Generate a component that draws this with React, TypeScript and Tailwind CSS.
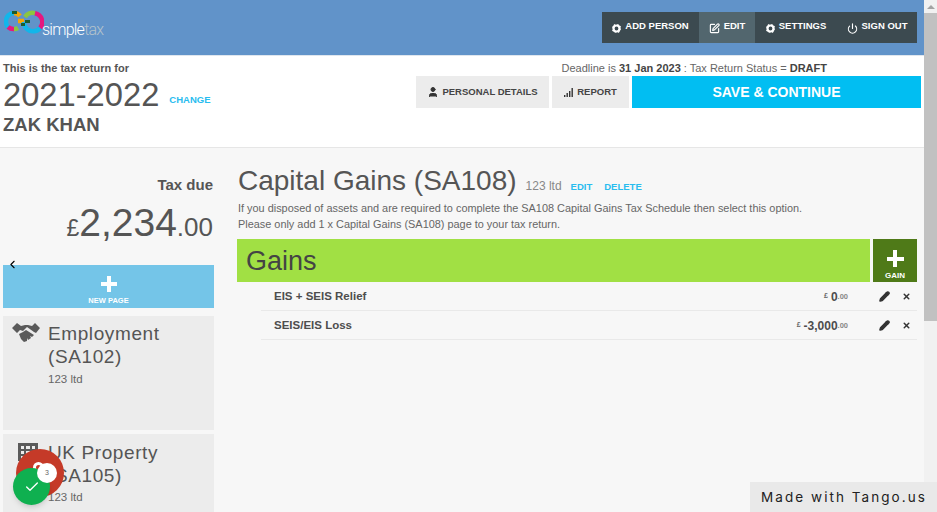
import { Check, Pencil, X, SquarePen, Power, User, ChevronLeft } from "lucide-react";

function Logo() {
  return (
    <svg width="40" height="32" viewBox="0 0 40 32" className="shrink-0">
      <g fill="none" strokeWidth="4.5">
        <path d="M10 5 A 8 8 0 0 0 2 13 A 8 8 0 0 0 4 19" stroke="#12b6ea" />
        <path d="M4 19 A 8 8 0 0 0 10 21" stroke="#e6177f" />
        <path d="M10 21 A 8 8 0 0 0 14 20" stroke="#8cc63f" />
        <path d="M10 5 A 8 8 0 0 1 16 8" stroke="#f7a600" />
        <path d="M21 9 A 9 9 0 0 1 31 5.2" stroke="#8cc63f" />
        <path d="M31 5.2 A 9 9 0 0 1 36 20" stroke="#e6177f" />
        <path d="M36 20 A 9 9 0 0 1 23 21" stroke="#12b6ea" />
        <path d="M14 13 H20" stroke="#f7a600" />
        <path d="M20 14 A 9 9 0 0 0 23 21" stroke="#12b6ea" />
      </g>
      <rect x="8" y="3" width="5" height="3" fill="#1d5c2e" />
      <rect x="17" y="15" width="4" height="3" fill="#1d5c2e" />
      <rect x="21" y="12" width="5" height="3" fill="#1d5c2e" />
    </svg>
  );
}

function Gear() {
  return (
    <svg width="9" height="9" viewBox="0 0 9 9" className="mt-[1px] shrink-0">
      <circle cx="4.5" cy="4.5" r="3" fill="none" stroke="#fff" strokeWidth="2.2" />
      <circle cx="4.5" cy="4.5" r="4.4" fill="none" stroke="#fff" strokeWidth="1" strokeDasharray="1.6 1.85" />
    </svg>
  );
}

function Cross({ size, bar }: { size: number; bar: number }) {
  return (
    <div className="relative shrink-0" style={{ width: size, height: size }}>
      <div className="absolute left-0 right-0 bg-white" style={{ top: (size - bar) / 2, height: bar }} />
      <div className="absolute bottom-0 top-0 bg-white" style={{ left: (size - bar) / 2, width: bar }} />
    </div>
  );
}

function Nav({ icon, label, active }: { icon: React.ReactNode; label: string; active?: boolean }) {
  return (
    <div className={`flex h-full items-center justify-center gap-[4px] text-[9.5px] font-bold text-white ${active ? "bg-[#52666e]" : ""}`}>
      {icon}
      <span className="-mt-[2px]">{label}</span>
    </div>
  );
}

function Row({ label, value }: { label: string; value: string }) {
  return (
    <div className="ml-[24px] flex h-[29px] items-center border-b border-[#e9e9e9] pr-[6px] pt-[1px] text-[#4d4d4d]">
      <span className="ml-[13px] flex-1 text-[11.5px] font-bold">{label}</span>
      <span className="text-[7px] font-bold text-[#666]">£</span>
      <span className="ml-[3px] text-[12px] font-bold">{value}</span>
      <span className="text-[7.5px] font-bold text-[#888]">.00</span>
      <Pencil size={11} strokeWidth={3} className="ml-[31px] text-[#333]" fill="#333" />
      <X size={9} strokeWidth={4} className="ml-[12px] text-[#333]" />
    </div>
  );
}

function Building() {
  return (
    <svg width="20" height="18" viewBox="0 0 20 18" className="mt-[2px] shrink-0" fill="#5a5a5a">
      <path d="M0 0H20V18H0Z M3 3V6H6V3Z M8 3V6H12V3Z M14 3V6H17V3Z M3 8V11H6V8Z M8 8V11H12V8Z M14 8V11H17V8Z M3 13V16H6V13Z M8 13V16H12V13Z M14 13V16H17V13Z" fillRule="evenodd" />
    </svg>
  );
}

function Handshake() {
  return (
    <svg width="28" height="21" viewBox="0 0 28 21" className="shrink-0" fill="#5a5a5a">
      <path d="M0 6 L5 1 L9 4 L13 3 L16 3 L20 4 L23 1 L28 6 L24 11 L22 10 L15 5 L11 9 L8 8 L5 11 Z" />
      <path d="M7 12 L11 10 L14 8 L22 13 L20 15 L18 14 L19 16 L16 18 L15 16 L15 19 L12 20 L9 17 Z" />
    </svg>
  );
}

export default function App() {
  return (
    <div className="relative flex h-[512px] w-[937px] overflow-hidden bg-[#f7f7f7] font-['Liberation_Sans',Arial,sans-serif] text-[#555]">
      <div className="w-[924px] shrink-0">
        {/* Top bar */}
        <header className="flex h-[56px] items-start justify-between border-b border-[#dfe6ee] bg-[#6193c9] pr-[7px]">
          <div className="flex items-start pl-[4px] pt-[8px]">
            <Logo />
            <span className="-ml-[2px] mt-[10px] font-['Roboto',sans-serif] text-[16px] font-light tracking-[-0.75px] text-white">
              simple<span className="text-[#b5c3cc]">tax</span>
            </span>
          </div>
          <nav className="mt-[12px] grid h-[31px] w-[315px] grid-cols-[97px_56px_82px_80px] bg-[#3c4a50]">
            <Nav label="ADD PERSON" icon={<Gear />} />
            <Nav label="EDIT" active icon={<SquarePen size={11} strokeWidth={2.5} className="mt-[1px]" />} />
            <Nav label="SETTINGS" icon={<Gear />} />
            <Nav label="SIGN OUT" icon={<Power size={11} strokeWidth={2.5} className="mt-[1px]" />} />
          </nav>
        </header>

        {/* Return summary */}
        <section className="flex h-[92px] justify-between border-b border-[#e6e6e6] bg-white pr-[3px]">
          <div className="pl-[3px] pt-[6px]">
            <div className="text-[11px] font-bold leading-[13px] text-[#555]">This is the tax return for</div>
            <div className="flex items-end pt-[1px]">
              <span className="text-[32.7px] leading-[38px] text-[#555]">2021-2022</span>
              <span className="mb-[7px] ml-[10px] text-[9.5px] font-bold text-[#29bdef]">CHANGE</span>
            </div>
            <div className="pt-[1px] text-[18.5px] font-bold leading-[20px] text-[#555]">ZAK KHAN</div>
          </div>
          <div className="flex flex-col items-end pt-[6px]">
            <div className="mr-[94px] text-[11px] leading-[13px] text-[#666]">
              Deadline is <b className="text-[#444]">31 Jan 2023</b> : Tax Return Status = <b className="text-[#444]">DRAFT</b>
            </div>
            <div className="mt-[1px] flex h-[32px] gap-[3px]">
              <div className="flex w-[133px] items-center justify-center gap-[3px] bg-[#ececec] text-[9.5px] font-bold text-[#444]">
                <User size={12} fill="#333" className="text-[#333]" />
                PERSONAL DETAILS
              </div>
              <div className="flex w-[77px] items-center justify-center gap-[3px] bg-[#ececec] text-[9.5px] font-bold text-[#444]">
                <svg width="10" height="9" viewBox="0 0 10 9" fill="#333"><rect x="0" y="7" width="1.4" height="2" /><rect x="2.5" y="5" width="1.4" height="4" /><rect x="5" y="3" width="1.4" height="6" /><rect x="7.5" y="0" width="1.4" height="9" /></svg>
                REPORT
              </div>
              <div className="flex w-[289px] items-center justify-center bg-[#01bef2] text-[14px] font-bold text-white">SAVE &amp; CONTINUE</div>
            </div>
          </div>
        </section>

        <div className="flex">
          {/* Left column */}
          <aside className="w-[214px] shrink-0 pl-[3px]">
            <div className="pr-[1px] pt-[29px] text-right text-[#555]">
              <div className="text-[15px] font-bold leading-[16px]">Tax due</div>
              <div className="mt-[10px] flex items-baseline justify-end leading-[40px]">
                <span className="text-[23px]">£</span>
                <span className="text-[39px]">2,234</span>
                <span className="text-[26px]">.00</span>
              </div>
            </div>
            <ChevronLeft size={13} strokeWidth={2} className="ml-[3px] mt-[10px] text-black" />
            <div className="-mt-[6px] flex h-[43px] w-[211px] flex-col items-center bg-[#74c5e8] pt-[11px] text-white">
              <Cross size={16} bar={4} />
              <span className="mt-[4px] text-[7.5px] font-bold leading-[9px]">NEW PAGE</span>
            </div>
            <div className="mt-[8px] flex h-[114px] w-[211px] gap-[8px] bg-[#ececec] pl-[9px] pt-[6px]">
              <Handshake />
              <div>
                <div className="text-[19px] leading-[23px] tracking-[0.6px] text-[#555]">Employment<br />(SA102)</div>
                <div className="mt-[3px] text-[11.5px] text-[#666]">123 ltd</div>
              </div>
            </div>
            <div className="mt-[4px] flex h-[100px] w-[211px] gap-[10px] bg-[#ececec] pl-[15px] pt-[7px]">
              <Building />
              <div>
                <div className="text-[19px] leading-[23px] tracking-[0.6px] text-[#555]">UK Property<br />(SA105)</div>
                <div className="mt-[2px] text-[11.5px] text-[#666]">123 ltd</div>
              </div>
            </div>
          </aside>

          {/* Main */}
          <main className="ml-[23px] w-[680px] pt-[15px]">
            <div className="flex items-baseline pl-[1px]">
              <h1 className="text-[28px] leading-[36px] text-[#555]">Capital Gains (SA108)</h1>
              <span className="ml-[9px] text-[12px] text-[#888]">123 ltd</span>
              <span className="ml-[9px] text-[9.5px] font-bold text-[#29bdef]">EDIT</span>
              <span className="ml-[12px] text-[9.5px] font-bold text-[#29bdef]">DELETE</span>
            </div>
            <p className="mt-[1px] pl-[1px] text-[10.9px] leading-[16px] text-[#666]">
              If you disposed of assets and are required to complete the SA108 Capital Gains Tax Schedule then select this option.<br />
              Please only add 1 x Capital Gains (SA108) page to your tax return.
            </p>
            <div className="mt-[7px] flex h-[43px] gap-[3px]">
              <div className="flex flex-1 items-center bg-[#a1e044] pl-[9px] pt-[2px] text-[27px] text-[#444]">Gains</div>
              <div className="flex w-[44px] flex-col items-center bg-[#4f7a18] pt-[11px] text-white">
                <Cross size={17} bar={4} />
                <span className="mt-[4px] text-[8px] font-bold leading-[9px]">GAIN</span>
              </div>
            </div>
            <Row label="EIS + SEIS Relief" value="0" />
            <Row label="SEIS/EIS Loss" value="-3,000" />
          </main>
        </div>
      </div>

      {/* Scrollbar */}
      <div className="flex w-[13px] flex-col bg-[#f1f1f1]">
        <div className="flex h-[13px] items-center justify-center">
          <div className="h-0 w-0 border-x-[4px] border-b-[4px] border-x-transparent border-b-[#a3a3a3]" />
        </div>
        <div className="h-[308px] bg-[#c1c1c1]" />
      </div>

      {/* Floating chat bubbles */}
      <div className="absolute left-[16px] top-[449px] h-[48px] w-[48px] rounded-full bg-[#c53a28]" />
      <div className="absolute left-[33px] top-[462px] h-[11px] w-[11px] rounded-full border-[3px] border-white" />
      <div className="absolute left-[13px] top-[468px] flex h-[37px] w-[37px] items-center justify-center rounded-full bg-[#0fb050] shadow-md">
        <Check size={16} strokeWidth={2} className="text-white" />
      </div>
      <div className="absolute left-[37px] top-[463px] flex h-[20px] w-[20px] items-center justify-center rounded-full bg-white text-[7px] text-[#666]">3</div>

      {/* Watermark */}
      <div className="absolute left-[750px] top-[482px] flex h-[30px] w-[187px] items-center justify-center bg-[#e9e9e9] pl-[1px] font-['Inter',sans-serif] text-[13.5px] tracking-[2.05px] text-[#222]">
        Made with Tango.us
      </div>
    </div>
  );
}
